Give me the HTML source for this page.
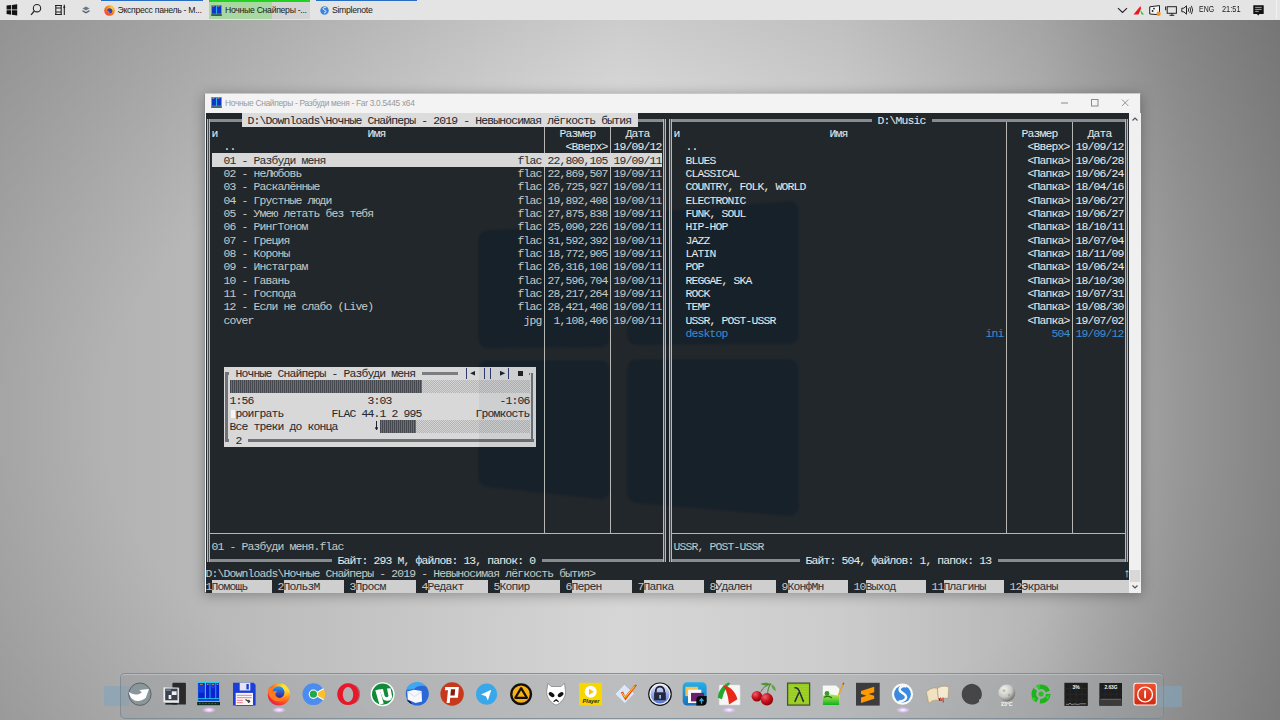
<!DOCTYPE html>
<html><head><meta charset="utf-8"><style>
*{margin:0;padding:0;box-sizing:border-box}
html,body{width:1280px;height:720px;overflow:hidden}
body{position:relative;font-family:"Liberation Sans",sans-serif;
 background:radial-gradient(farthest-corner at 620px 420px,rgba(0,0,0,0) 55%,rgba(0,0,0,.17) 100%),linear-gradient(90deg,#acacac 0,#b8b8b8 200px,#c6c6c6 400px,#d6d6d6 620px,#cccccc 840px,#b6b6b6 1040px,#9a9a9a 1180px,#8c8c8c 1280px)}
#tb{position:absolute;left:0;top:0;width:1280px;height:19.5px;background:#e4e4e4}
.tbt{position:absolute;top:4.6px;font-size:8.7px;color:#1a1a1a;white-space:pre;letter-spacing:-0.3px}
#shadow{position:absolute;left:204px;top:93px;width:937px;height:500px;box-shadow:0 2px 12px rgba(0,0,0,.3)}
#win{position:absolute;left:204.3px;top:92.8px;width:937.2px;height:500.4px;background:#f3f3f3;border:1px solid #8e8e8e;border-top-color:#c8c8c8}
#con{position:absolute;left:205.5px;top:113.333px;width:923.5px;height:479.6px;background:#22272b;overflow:hidden}
.r,.t,.sq{position:absolute}
.t{white-space:pre;font-family:"Liberation Mono",monospace;font-size:11.4px;letter-spacing:-0.841px;line-height:11px;height:11px;-webkit-text-stroke:0.05px currentColor}
.sq{background:#1a2730;filter:blur(1.2px)}
#ttl{position:absolute;left:225px;top:98.3px;font-size:8.4px;color:#999;white-space:pre;letter-spacing:-0.3px}
#sb{position:absolute;left:1129px;top:113.3px;width:11.6px;height:479.5px;background:#f0f0f0}
#dock{position:absolute;left:120px;top:673.3px;width:1044px;height:45.5px;border-radius:5px;background:rgba(150,155,160,.42);border:1px solid rgba(120,135,148,.8);box-shadow:inset 0 1px 0 rgba(230,235,240,.35)}
</style></head><body>
<div id="tb">
<svg style="position:absolute;left:6px;top:4px" width="12" height="12" viewBox="0 0 12 12"><path d="M0.6 1.6L5.2 1v4.4H0.6zM6 0.9L11.2 0.2v5.2H6zM0.6 6.2h4.6v4.5L0.6 10zM6 6.2h5.2v5.3L6 10.8z" fill="#111"/></svg>
<svg style="position:absolute;left:30px;top:3px" width="12" height="13" viewBox="0 0 12 13"><circle cx="7" cy="5.2" r="3.7" fill="none" stroke="#222" stroke-width="1.1"/><path d="M4.3 8L1 11.8" stroke="#222" stroke-width="1.2"/></svg>
<svg style="position:absolute;left:54px;top:4px" width="12" height="12" viewBox="0 0 12 12"><path d="M1 1.5h7M1 10.5h7M1.8 1.5v9M7.2 1.5v9M1.8 4h5.4M1.8 8h5.4" stroke="#222" stroke-width="1.1" fill="none"/><path d="M10.3 0.8v10.2" stroke="#222" stroke-width="1.1"/><circle cx="10.3" cy="3.3" r="1" fill="#222"/></svg>
<svg style="position:absolute;left:82px;top:6px" width="8" height="8" viewBox="0 0 8 8"><path d="M4 0.5L7.5 2.5 4 4.5 0.5 2.5z" fill="#6b7a88"/><path d="M0.5 4L4 6 7.5 4V5.5L4 7.5 0.5 5.5z" fill="#4e5d6b"/></svg>
<div style="position:absolute;left:101px;top:0;width:102px;height:1.4px;background:#2a6ec4"></div>
<div style="position:absolute;left:209px;top:0;width:101px;height:19.4px;background:#d4d4d4"></div>
<div style="position:absolute;left:209px;top:0;width:63px;height:19.4px;background:#a9d8a2"></div>
<div style="position:absolute;left:209px;top:0;width:101px;height:1.6px;background:#23d11f"></div>
<div style="position:absolute;left:316px;top:0;width:101px;height:1.4px;background:#2a6ec4"></div>
<svg style="position:absolute;left:104px;top:5px" width="11" height="11" viewBox="0 0 22 22"><defs><radialGradient id="ffs" cx="0.7" cy="0.3" r="0.9"><stop offset="0" stop-color="#ffde3b"/><stop offset="0.45" stop-color="#ff8a18"/><stop offset="1" stop-color="#e8283c"/></radialGradient></defs><circle cx="11" cy="11" r="10.5" fill="url(#ffs)"/><circle cx="11.5" cy="11.5" r="5.2" fill="#3b3fb0"/><path d="M6 12c1 3 4 4.5 6.5 3.5-2-0.2-3.5-1.5-3.8-3.4z" fill="#ff9a1e"/></svg>
<div class="tbt" style="left:117.5px">Экспресс панель - М...</div>
<svg style="position:absolute;left:211px;top:5px" width="11" height="11" viewBox="0 0 11 11"><rect x="0.5" y="0.3" width="4.8" height="8.7" fill="#1232c8" stroke="#18c0ea" stroke-width="0.7"/><rect x="5.7" y="0.3" width="4.8" height="8.7" fill="#1232c8" stroke="#18c0ea" stroke-width="0.7"/><rect x="1.3" y="0.8" width="2" height="0.8" fill="#e9a640"/><rect x="6.5" y="0.8" width="2" height="0.8" fill="#e9a640"/><rect x="0.2" y="9.4" width="10.6" height="1.3" fill="#0a2a2a"/></svg>
<div class="tbt" style="left:225px">Ночные Снайперы -...</div>
<svg style="position:absolute;left:319.5px;top:6px" width="9" height="9" viewBox="0 0 18 18"><circle cx="9" cy="9" r="8.5" fill="#3b86d8"/><path d="M11.5 3.2c-3-1.2-6 0.5-5.2 3 0.6 1.8 4.5 2 5.2 4 0.7 2-1.2 3.6-3.5 3.8" stroke="#fff" stroke-width="2" fill="none"/></svg>
<div class="tbt" style="left:332px">Simplenote</div>
<svg style="position:absolute;left:1117px;top:7px" width="11" height="7" viewBox="0 0 11 7"><path d="M1 1.2L5.5 5.5 10 1.2" stroke="#222" stroke-width="1.1" fill="none"/></svg>
<svg style="position:absolute;left:1133px;top:5px" width="12" height="10" viewBox="0 0 12 10"><path d="M0.5 9.5L7.5 1 8 3.5 5.5 9.5z" fill="#f0141e"/><path d="M7 4.5L11 9.5H8.5z" fill="#19d13a"/></svg>
<svg style="position:absolute;left:1148.5px;top:4.5px" width="13" height="11" viewBox="0 0 13 11"><path d="M0.7 1.8L10.5 0.6V9.8L0.7 9z" fill="#f4f4f4" stroke="#222" stroke-width="1"/><circle cx="5" cy="3.6" r="0.9" fill="#222"/><circle cx="3.6" cy="6" r="0.9" fill="#222"/><circle cx="9.6" cy="8.7" r="2.1" fill="#f7931a"/></svg>
<svg style="position:absolute;left:1164.5px;top:5.5px" width="12" height="10" viewBox="0 0 12 10"><rect x="2.2" y="0.7" width="9.2" height="6.6" fill="none" stroke="#222" stroke-width="1"/><path d="M4.5 9.3h4.8M6.9 7.3v2" stroke="#222" stroke-width="1"/><path d="M0.6 0.5v3.8" stroke="#333" stroke-width="1.2"/></svg>
<svg style="position:absolute;left:1180.5px;top:5px" width="12" height="10" viewBox="0 0 12 10"><path d="M0.8 3.2h2L5.5 0.8v8.4L2.8 6.8h-2z" fill="none" stroke="#222" stroke-width="1"/><path d="M7.2 3.2q1 1.8 0 3.6M8.8 2q1.8 3 0 6M10.4 0.8q2.5 4.2 0 8.4" stroke="#222" stroke-width="0.9" fill="none"/></svg>
<div class="tbt" style="left:1198.8px;font-size:8.8px;top:4.3px;letter-spacing:0;transform:scaleX(0.79);transform-origin:0 0">ENG</div>
<div class="tbt" style="left:1222.3px;font-size:8.8px;top:4.3px;letter-spacing:0;transform:scaleX(0.84);transform-origin:0 0">21:51</div>
<svg style="position:absolute;left:1252.5px;top:5px" width="11" height="11" viewBox="0 0 11 11"><path d="M0.3 0.3h10.4v8.6H6.5L5.2 10.5 3.9 8.9H0.3z" fill="#111"/><path d="M2.2 2.4h6.5M2.2 4.4h6.5M2.2 6.4h3.5" stroke="#c8c8c8" stroke-width="0.8"/></svg>
<div style="position:absolute;left:1276px;top:0;width:1px;height:19.4px;background:#f2f2f2"></div>
</div>
<div id="shadow"></div>
<div id="win"></div>
<svg style="position:absolute;left:211px;top:97px" width="11" height="11" viewBox="0 0 11 11"><rect x="0.5" y="0.3" width="4.8" height="8.7" fill="#1232c8" stroke="#18c0ea" stroke-width="0.7"/><rect x="5.7" y="0.3" width="4.8" height="8.7" fill="#1232c8" stroke="#18c0ea" stroke-width="0.7"/><rect x="1.3" y="0.8" width="2" height="0.8" fill="#e9a640"/><rect x="6.5" y="0.8" width="2" height="0.8" fill="#e9a640"/><rect x="0.2" y="9.4" width="10.6" height="1.3" fill="#0a2a2a"/></svg>
<div id="ttl">Ночные Снайперы - Разбуди меня - Far 3.0.5445 x64</div>
<svg style="position:absolute;left:1060px;top:98px" width="70" height="10" viewBox="0 0 70 10"><path d="M1 5h7" stroke="#8a8a8a" stroke-width="1"/><rect x="31.5" y="1.5" width="6.5" height="6.5" fill="none" stroke="#8a8a8a" stroke-width="1"/><path d="M62 1.5l6.3 6.5M68.3 1.5L62 8" stroke="#8a8a8a" stroke-width="0.9"/></svg>
<div id="con">
<svg style="position:absolute;left:0;top:0;filter:blur(1.2px)" width="924" height="480"><path d="M281.5 126.7 L394.5 121.7 L394.5 224.7 L281.5 225.7Z" fill="#17212a" stroke="#17212a" stroke-width="18" stroke-linejoin="round"/><path d="M430.5 109.7 L583.5 97.7 L583.5 221.7 L430.5 222.7Z" fill="#17212a" stroke="#17212a" stroke-width="18" stroke-linejoin="round"/><path d="M281.5 256.7 L394.5 256.7 L394.5 376.7 L281.5 364.7Z" fill="#17212a" stroke="#17212a" stroke-width="18" stroke-linejoin="round"/><path d="M430.5 255.7 L583.5 255.7 L583.5 393.7 L430.5 380.7Z" fill="#17212a" stroke="#17212a" stroke-width="18" stroke-linejoin="round"/></svg>
<div class="r" style="left:1.50px;top:5.70px;width:459.00px;height:3.00px;background-color:#888b8f;"></div>
<div class="r" style="left:1.50px;top:445.60px;width:459.00px;height:3.00px;background-color:#888b8f;"></div>
<div class="r" style="left:1.30px;top:5.70px;width:1.20px;height:442.90px;background-color:#b8b9b5;"></div>
<div class="r" style="left:3.50px;top:5.70px;width:1.20px;height:442.90px;background-color:#b8b9b5;"></div>
<div class="r" style="left:2.50px;top:5.70px;width:1.00px;height:442.90px;background-color:#4a4e52;"></div>
<div class="r" style="left:457.30px;top:5.70px;width:1.20px;height:442.90px;background-color:#b8b9b5;"></div>
<div class="r" style="left:459.50px;top:5.70px;width:1.20px;height:442.90px;background-color:#b8b9b5;"></div>
<div class="r" style="left:458.50px;top:5.70px;width:1.00px;height:442.90px;background-color:#4a4e52;"></div>
<div class="r" style="left:338.60px;top:8.70px;width:1.10px;height:411.23px;background-color:#b6b7b3;"></div>
<div class="r" style="left:404.60px;top:8.70px;width:1.10px;height:411.23px;background-color:#b6b7b3;"></div>
<div class="r" style="left:4.50px;top:419.43px;width:453.00px;height:1.10px;background-color:#b6b7b3;"></div>
<div class="r" style="left:463.50px;top:5.70px;width:459.00px;height:3.00px;background-color:#888b8f;"></div>
<div class="r" style="left:463.50px;top:445.60px;width:459.00px;height:3.00px;background-color:#888b8f;"></div>
<div class="r" style="left:463.30px;top:5.70px;width:1.20px;height:442.90px;background-color:#b8b9b5;"></div>
<div class="r" style="left:465.50px;top:5.70px;width:1.20px;height:442.90px;background-color:#b8b9b5;"></div>
<div class="r" style="left:464.50px;top:5.70px;width:1.00px;height:442.90px;background-color:#4a4e52;"></div>
<div class="r" style="left:919.30px;top:5.70px;width:1.20px;height:442.90px;background-color:#b8b9b5;"></div>
<div class="r" style="left:921.50px;top:5.70px;width:1.20px;height:442.90px;background-color:#b8b9b5;"></div>
<div class="r" style="left:920.50px;top:5.70px;width:1.00px;height:442.90px;background-color:#4a4e52;"></div>
<div class="r" style="left:800.60px;top:8.70px;width:1.10px;height:411.23px;background-color:#b6b7b3;"></div>
<div class="r" style="left:866.60px;top:8.70px;width:1.10px;height:411.23px;background-color:#b6b7b3;"></div>
<div class="r" style="left:466.50px;top:419.43px;width:453.00px;height:1.10px;background-color:#b6b7b3;"></div>
<div class="r" style="left:6.00px;top:40.00px;width:450.00px;height:13.33px;background-color:#d8d8d8;"></div>
<div class="r" style="left:6.00px;top:466.67px;width:60.00px;height:13.33px;background-color:#cfcfcf;"></div>
<div class="r" style="left:78.00px;top:466.67px;width:60.00px;height:13.33px;background-color:#cfcfcf;"></div>
<div class="r" style="left:150.00px;top:466.67px;width:60.00px;height:13.33px;background-color:#cfcfcf;"></div>
<div class="r" style="left:222.00px;top:466.67px;width:60.00px;height:13.33px;background-color:#cfcfcf;"></div>
<div class="r" style="left:294.00px;top:466.67px;width:60.00px;height:13.33px;background-color:#cfcfcf;"></div>
<div class="r" style="left:366.00px;top:466.67px;width:60.00px;height:13.33px;background-color:#cfcfcf;"></div>
<div class="r" style="left:438.00px;top:466.67px;width:60.00px;height:13.33px;background-color:#cfcfcf;"></div>
<div class="r" style="left:510.00px;top:466.67px;width:60.00px;height:13.33px;background-color:#cfcfcf;"></div>
<div class="r" style="left:582.00px;top:466.67px;width:60.00px;height:13.33px;background-color:#cfcfcf;"></div>
<div class="r" style="left:660.00px;top:466.67px;width:60.00px;height:13.33px;background-color:#cfcfcf;"></div>
<div class="r" style="left:738.00px;top:466.67px;width:60.00px;height:13.33px;background-color:#cfcfcf;"></div>
<div class="r" style="left:816.00px;top:466.67px;width:108.00px;height:13.33px;background-color:#cfcfcf;"></div>
<div class="r" style="left:18.00px;top:253.33px;width:312.00px;height:80.00px;background-color:#d8d8d8;"></div>
<div class="r" style="left:19.60px;top:259.03px;width:2.90px;height:68.17px;background-color:#6f7276;"></div>
<div class="r" style="left:19.60px;top:259.03px;width:4.40px;height:2.60px;background-color:#6f7276;"></div>
<div class="r" style="left:325.40px;top:259.23px;width:2.60px;height:67.97px;background-color:#6f7276;"></div>
<div class="r" style="left:323.00px;top:259.23px;width:1.60px;height:2.40px;background-color:#6f7276;"></div>
<div class="r" style="left:19.60px;top:325.70px;width:3.50px;height:2.50px;background-color:#6f7276;"></div>
<div class="r" style="left:42.00px;top:325.70px;width:286.00px;height:2.50px;background-color:#6f7276;"></div>
<div class="r" style="left:216.00px;top:258.93px;width:36.00px;height:2.50px;background-color:#7b7d80;"></div>
<div class="r" style="left:260.50px;top:254.83px;width:1.20px;height:10.50px;background-color:#2f3a6a;"></div>
<div class="r" style="left:278.50px;top:254.83px;width:1.20px;height:10.50px;background-color:#2f3a6a;"></div>
<div class="r" style="left:284.50px;top:254.83px;width:1.20px;height:10.50px;background-color:#2f3a6a;"></div>
<div class="r" style="left:302.50px;top:254.83px;width:1.20px;height:10.50px;background-color:#2f3a6a;"></div>
<div class="r" style="left:264.60px;top:257.53px;width:5.40px;height:5.00px;background-color:transparent;clip-path:polygon(0 50%,100% 0,100% 100%);background:#1c2430"></div>
<div class="r" style="left:294.40px;top:257.53px;width:5.40px;height:5.00px;background-color:transparent;clip-path:polygon(0 0,100% 50%,0 100%);background:#1c2430"></div>
<div class="r" style="left:312.40px;top:257.63px;width:5.20px;height:5.20px;background-color:#1e2226;"></div>
<div class="r" style="left:24.00px;top:266.67px;width:192.00px;height:12.53px;background-color:#55585c;background-image:repeating-linear-gradient(90deg,#45484e 0 1px,#6c6e70 1px 2px)"></div>
<div class="r" style="left:216.00px;top:266.67px;width:108.00px;height:12.53px;background-color:#c4c4c4;background:repeating-conic-gradient(#b4b5b7 0 25%,#d3d3d3 0 50%) 0 0/2px 2px"></div>
<div class="r" style="left:25.00px;top:296.33px;width:4.50px;height:8.00px;background-color:#f6f6f6;"></div>
<div class="r" style="left:170.50px;top:307.87px;width:1.10px;height:8.60px;background-color:#1c2430;"></div>
<div class="r" style="left:169.10px;top:313.87px;width:3.90px;height:3.20px;background-color:transparent;clip-path:polygon(0 0,100% 0,50% 100%);background:#1c2430"></div>
<div class="r" style="left:174.00px;top:306.67px;width:36.00px;height:12.53px;background-color:#55585c;background-image:repeating-linear-gradient(90deg,#45484e 0 1px,#6c6e70 1px 2px)"></div>
<div class="r" style="left:210.00px;top:306.67px;width:114.00px;height:12.53px;background-color:#c4c4c4;background:repeating-conic-gradient(#b4b5b7 0 25%,#d3d3d3 0 50%) 0 0/2px 2px"></div>
<div class="r" style="left:36.00px;top:0.000px;width:396.00px;height:13.333px;background:#dcdcdc"></div>
<div class="t" style="left:36.00px;top:2.200px;color:#232a30"> D:\Downloads\Ночные Снайперы - 2019 - Невыносимая лёгкость бытия </div>
<div class="r" style="left:666.00px;top:0.000px;width:60.00px;height:13.333px;background:#22272b"></div>
<div class="t" style="left:666.00px;top:2.200px;color:#e8e8e6"> D:\Music </div>
<div class="t" style="left:6.00px;top:15.533px;color:#e8e8e6">и</div>
<div class="t" style="left:162.00px;top:15.533px;color:#e8e8e6">Имя</div>
<div class="t" style="left:354.00px;top:15.533px;color:#e8e8e6">Размер</div>
<div class="t" style="left:420.00px;top:15.533px;color:#e8e8e6">Дата</div>
<div class="t" style="left:18.00px;top:28.867px;color:#e8e8e6">..</div>
<div class="t" style="left:360.00px;top:28.867px;color:#e8e8e6">&lt;Вверх&gt;</div>
<div class="t" style="left:408.00px;top:28.867px;color:#e8e8e6">19/09/12</div>
<div class="t" style="left:468.00px;top:15.533px;color:#e8e8e6">и</div>
<div class="t" style="left:624.00px;top:15.533px;color:#e8e8e6">Имя</div>
<div class="t" style="left:816.00px;top:15.533px;color:#e8e8e6">Размер</div>
<div class="t" style="left:882.00px;top:15.533px;color:#e8e8e6">Дата</div>
<div class="t" style="left:480.00px;top:28.867px;color:#e8e8e6">..</div>
<div class="t" style="left:822.00px;top:28.867px;color:#e8e8e6">&lt;Вверх&gt;</div>
<div class="t" style="left:870.00px;top:28.867px;color:#e8e8e6">19/09/12</div>
<div class="t" style="left:18.00px;top:42.200px;color:#2a3036">01 - Разбуди меня</div>
<div class="t" style="left:312.00px;top:42.200px;color:#2a3036">flac</div>
<div class="t" style="left:342.00px;top:42.200px;color:#2a3036">22,800,105</div>
<div class="t" style="left:408.00px;top:42.200px;color:#2a3036">19/09/11</div>
<div class="t" style="left:18.00px;top:55.533px;color:#c6c7c3">02 - неЛюбовь</div>
<div class="t" style="left:312.00px;top:55.533px;color:#c6c7c3">flac</div>
<div class="t" style="left:342.00px;top:55.533px;color:#c6c7c3">22,869,507</div>
<div class="t" style="left:408.00px;top:55.533px;color:#c6c7c3">19/09/11</div>
<div class="t" style="left:18.00px;top:68.867px;color:#c6c7c3">03 - Раскалённые</div>
<div class="t" style="left:312.00px;top:68.867px;color:#c6c7c3">flac</div>
<div class="t" style="left:342.00px;top:68.867px;color:#c6c7c3">26,725,927</div>
<div class="t" style="left:408.00px;top:68.867px;color:#c6c7c3">19/09/11</div>
<div class="t" style="left:18.00px;top:82.200px;color:#c6c7c3">04 - Грустные люди</div>
<div class="t" style="left:312.00px;top:82.200px;color:#c6c7c3">flac</div>
<div class="t" style="left:342.00px;top:82.200px;color:#c6c7c3">19,892,408</div>
<div class="t" style="left:408.00px;top:82.200px;color:#c6c7c3">19/09/11</div>
<div class="t" style="left:18.00px;top:95.533px;color:#c6c7c3">05 - Умею летать без тебя</div>
<div class="t" style="left:312.00px;top:95.533px;color:#c6c7c3">flac</div>
<div class="t" style="left:342.00px;top:95.533px;color:#c6c7c3">27,875,838</div>
<div class="t" style="left:408.00px;top:95.533px;color:#c6c7c3">19/09/11</div>
<div class="t" style="left:18.00px;top:108.867px;color:#c6c7c3">06 - РингТоном</div>
<div class="t" style="left:312.00px;top:108.867px;color:#c6c7c3">flac</div>
<div class="t" style="left:342.00px;top:108.867px;color:#c6c7c3">25,090,226</div>
<div class="t" style="left:408.00px;top:108.867px;color:#c6c7c3">19/09/11</div>
<div class="t" style="left:18.00px;top:122.200px;color:#c6c7c3">07 - Греция</div>
<div class="t" style="left:312.00px;top:122.200px;color:#c6c7c3">flac</div>
<div class="t" style="left:342.00px;top:122.200px;color:#c6c7c3">31,592,392</div>
<div class="t" style="left:408.00px;top:122.200px;color:#c6c7c3">19/09/11</div>
<div class="t" style="left:18.00px;top:135.533px;color:#c6c7c3">08 - Короны</div>
<div class="t" style="left:312.00px;top:135.533px;color:#c6c7c3">flac</div>
<div class="t" style="left:342.00px;top:135.533px;color:#c6c7c3">18,772,905</div>
<div class="t" style="left:408.00px;top:135.533px;color:#c6c7c3">19/09/11</div>
<div class="t" style="left:18.00px;top:148.867px;color:#c6c7c3">09 - Инстаграм</div>
<div class="t" style="left:312.00px;top:148.867px;color:#c6c7c3">flac</div>
<div class="t" style="left:342.00px;top:148.867px;color:#c6c7c3">26,316,108</div>
<div class="t" style="left:408.00px;top:148.867px;color:#c6c7c3">19/09/11</div>
<div class="t" style="left:18.00px;top:162.200px;color:#c6c7c3">10 - Гавань</div>
<div class="t" style="left:312.00px;top:162.200px;color:#c6c7c3">flac</div>
<div class="t" style="left:342.00px;top:162.200px;color:#c6c7c3">27,596,704</div>
<div class="t" style="left:408.00px;top:162.200px;color:#c6c7c3">19/09/11</div>
<div class="t" style="left:18.00px;top:175.533px;color:#c6c7c3">11 - Господа</div>
<div class="t" style="left:312.00px;top:175.533px;color:#c6c7c3">flac</div>
<div class="t" style="left:342.00px;top:175.533px;color:#c6c7c3">28,217,264</div>
<div class="t" style="left:408.00px;top:175.533px;color:#c6c7c3">19/09/11</div>
<div class="t" style="left:18.00px;top:188.867px;color:#c6c7c3">12 - Если не слабо (Live)</div>
<div class="t" style="left:312.00px;top:188.867px;color:#c6c7c3">flac</div>
<div class="t" style="left:342.00px;top:188.867px;color:#c6c7c3">28,421,408</div>
<div class="t" style="left:408.00px;top:188.867px;color:#c6c7c3">19/09/11</div>
<div class="t" style="left:18.00px;top:202.200px;color:#c6c7c3">cover</div>
<div class="t" style="left:318.00px;top:202.200px;color:#c6c7c3">jpg</div>
<div class="t" style="left:348.00px;top:202.200px;color:#c6c7c3">1,108,406</div>
<div class="t" style="left:408.00px;top:202.200px;color:#c6c7c3">19/09/11</div>
<div class="t" style="left:480.00px;top:42.200px;color:#e8e8e6">BLUES</div>
<div class="t" style="left:822.00px;top:42.200px;color:#e8e8e6">&lt;Папка&gt;</div>
<div class="t" style="left:870.00px;top:42.200px;color:#e8e8e6">19/06/28</div>
<div class="t" style="left:480.00px;top:55.533px;color:#e8e8e6">CLASSICAL</div>
<div class="t" style="left:822.00px;top:55.533px;color:#e8e8e6">&lt;Папка&gt;</div>
<div class="t" style="left:870.00px;top:55.533px;color:#e8e8e6">19/06/24</div>
<div class="t" style="left:480.00px;top:68.867px;color:#e8e8e6">COUNTRY, FOLK, WORLD</div>
<div class="t" style="left:822.00px;top:68.867px;color:#e8e8e6">&lt;Папка&gt;</div>
<div class="t" style="left:870.00px;top:68.867px;color:#e8e8e6">18/04/16</div>
<div class="t" style="left:480.00px;top:82.200px;color:#e8e8e6">ELECTRONIC</div>
<div class="t" style="left:822.00px;top:82.200px;color:#e8e8e6">&lt;Папка&gt;</div>
<div class="t" style="left:870.00px;top:82.200px;color:#e8e8e6">19/06/27</div>
<div class="t" style="left:480.00px;top:95.533px;color:#e8e8e6">FUNK, SOUL</div>
<div class="t" style="left:822.00px;top:95.533px;color:#e8e8e6">&lt;Папка&gt;</div>
<div class="t" style="left:870.00px;top:95.533px;color:#e8e8e6">19/06/27</div>
<div class="t" style="left:480.00px;top:108.867px;color:#e8e8e6">HIP-HOP</div>
<div class="t" style="left:822.00px;top:108.867px;color:#e8e8e6">&lt;Папка&gt;</div>
<div class="t" style="left:870.00px;top:108.867px;color:#e8e8e6">18/10/11</div>
<div class="t" style="left:480.00px;top:122.200px;color:#e8e8e6">JAZZ</div>
<div class="t" style="left:822.00px;top:122.200px;color:#e8e8e6">&lt;Папка&gt;</div>
<div class="t" style="left:870.00px;top:122.200px;color:#e8e8e6">18/07/04</div>
<div class="t" style="left:480.00px;top:135.533px;color:#e8e8e6">LATIN</div>
<div class="t" style="left:822.00px;top:135.533px;color:#e8e8e6">&lt;Папка&gt;</div>
<div class="t" style="left:870.00px;top:135.533px;color:#e8e8e6">18/11/09</div>
<div class="t" style="left:480.00px;top:148.867px;color:#e8e8e6">POP</div>
<div class="t" style="left:822.00px;top:148.867px;color:#e8e8e6">&lt;Папка&gt;</div>
<div class="t" style="left:870.00px;top:148.867px;color:#e8e8e6">19/06/24</div>
<div class="t" style="left:480.00px;top:162.200px;color:#e8e8e6">REGGAE, SKA</div>
<div class="t" style="left:822.00px;top:162.200px;color:#e8e8e6">&lt;Папка&gt;</div>
<div class="t" style="left:870.00px;top:162.200px;color:#e8e8e6">18/10/30</div>
<div class="t" style="left:480.00px;top:175.533px;color:#e8e8e6">ROCK</div>
<div class="t" style="left:822.00px;top:175.533px;color:#e8e8e6">&lt;Папка&gt;</div>
<div class="t" style="left:870.00px;top:175.533px;color:#e8e8e6">19/07/31</div>
<div class="t" style="left:480.00px;top:188.867px;color:#e8e8e6">TEMP</div>
<div class="t" style="left:822.00px;top:188.867px;color:#e8e8e6">&lt;Папка&gt;</div>
<div class="t" style="left:870.00px;top:188.867px;color:#e8e8e6">19/08/30</div>
<div class="t" style="left:480.00px;top:202.200px;color:#e8e8e6">USSR, POST-USSR</div>
<div class="t" style="left:822.00px;top:202.200px;color:#e8e8e6">&lt;Папка&gt;</div>
<div class="t" style="left:870.00px;top:202.200px;color:#e8e8e6">19/07/02</div>
<div class="t" style="left:480.00px;top:215.533px;color:#3d8ccc">desktop</div>
<div class="t" style="left:780.00px;top:215.533px;color:#3d8ccc">ini</div>
<div class="t" style="left:846.00px;top:215.533px;color:#3d8ccc">504</div>
<div class="t" style="left:870.00px;top:215.533px;color:#3d8ccc">19/09/12</div>
<div class="t" style="left:6.00px;top:428.867px;color:#c6c7c3">01 - Разбуди меня.flac</div>
<div class="t" style="left:468.00px;top:428.867px;color:#c6c7c3">USSR, POST-USSR</div>
<div class="r" style="left:126.00px;top:440.000px;width:210.00px;height:13.333px;background:#22272b"></div>
<div class="t" style="left:126.00px;top:442.200px;color:#e8e8e6"> Байт: 293 M, файлов: 13, папок: 0 </div>
<div class="r" style="left:594.00px;top:440.000px;width:198.00px;height:13.333px;background:#22272b"></div>
<div class="t" style="left:594.00px;top:442.200px;color:#e8e8e6"> Байт: 504, файлов: 1, папок: 13 </div>
<div class="t" style="left:0.00px;top:455.533px;color:#c6c7c3">D:\Downloads\Ночные Снайперы - 2019 - Невыносимая лёгкость бытия&gt;</div>
<div class="t" style="left:918.00px;top:455.533px;color:#e8e8e6">↑</div>
<div class="t" style="left:0.00px;top:468.867px;color:#c6c7c3">1</div>
<div class="t" style="left:6.00px;top:468.867px;color:#2c3238">Помощь</div>
<div class="t" style="left:72.00px;top:468.867px;color:#c6c7c3">2</div>
<div class="t" style="left:78.00px;top:468.867px;color:#2c3238">ПользМ</div>
<div class="t" style="left:144.00px;top:468.867px;color:#c6c7c3">3</div>
<div class="t" style="left:150.00px;top:468.867px;color:#2c3238">Просм</div>
<div class="t" style="left:216.00px;top:468.867px;color:#c6c7c3">4</div>
<div class="t" style="left:222.00px;top:468.867px;color:#2c3238">Редакт</div>
<div class="t" style="left:288.00px;top:468.867px;color:#c6c7c3">5</div>
<div class="t" style="left:294.00px;top:468.867px;color:#2c3238">Копир</div>
<div class="t" style="left:360.00px;top:468.867px;color:#c6c7c3">6</div>
<div class="t" style="left:366.00px;top:468.867px;color:#2c3238">Перен</div>
<div class="t" style="left:432.00px;top:468.867px;color:#c6c7c3">7</div>
<div class="t" style="left:438.00px;top:468.867px;color:#2c3238">Папка</div>
<div class="t" style="left:504.00px;top:468.867px;color:#c6c7c3">8</div>
<div class="t" style="left:510.00px;top:468.867px;color:#2c3238">Удален</div>
<div class="t" style="left:576.00px;top:468.867px;color:#c6c7c3">9</div>
<div class="t" style="left:582.00px;top:468.867px;color:#2c3238">КонфМн</div>
<div class="t" style="left:648.00px;top:468.867px;color:#c6c7c3">10</div>
<div class="t" style="left:660.00px;top:468.867px;color:#2c3238">Выход</div>
<div class="t" style="left:726.00px;top:468.867px;color:#c6c7c3">11</div>
<div class="t" style="left:738.00px;top:468.867px;color:#2c3238">Плагины</div>
<div class="t" style="left:804.00px;top:468.867px;color:#c6c7c3">12</div>
<div class="t" style="left:816.00px;top:468.867px;color:#2c3238">Экраны</div>
<div class="t" style="left:30.00px;top:322.200px;color:#242a30">2</div>
<div class="t" style="left:30.00px;top:255.533px;color:#242a30">Ночные Снайперы - Разбуди меня</div>
<div class="t" style="left:24.00px;top:282.200px;color:#242a30">1:56</div>
<div class="t" style="left:162.00px;top:282.200px;color:#242a30">3:03</div>
<div class="t" style="left:294.00px;top:282.200px;color:#242a30">-1:06</div>
<div class="t" style="left:30.00px;top:295.533px;color:#242a30">роиграть</div>
<div class="t" style="left:126.00px;top:295.533px;color:#242a30">FLAC 44.1 2 995</div>
<div class="t" style="left:270.00px;top:295.533px;color:#242a30">Громкость</div>
<div class="t" style="left:24.00px;top:308.867px;color:#242a30">Все треки до конца</div>
<div class="r" style="left:273.00px;top:253.33px;width:57.00px;height:80.00px;background:rgba(20,60,100,.055)"></div>
</div>
<div id="sb"></div>
<svg style="position:absolute;left:1130px;top:116px" width="10" height="476" viewBox="0 0 10 476"><path d="M2.5 4.5L5 2 7.5 4.5" stroke="#555" stroke-width="1.2" fill="none"/><rect x="0" y="454" width="10" height="12" fill="#d8d8d8"/><path d="M2.5 469.5L5 472 7.5 469.5" stroke="#555" stroke-width="1.2" fill="none"/></svg>
<div style="position:absolute;left:103.7px;top:686.2px;width:25px;height:20px;background:rgba(130,165,190,.6)"></div>
<div style="position:absolute;left:1157px;top:686.2px;width:24.7px;height:20.4px;background:rgba(130,165,190,.6)"></div>
<div id="dock"></div>
<svg style="position:absolute;left:0;top:0;pointer-events:none" width="1280" height="720" viewBox="0 0 1280 720">
<defs>
<radialGradient id="gff" cx="0.75" cy="0.2" r="0.95"><stop offset="0" stop-color="#fff44a"/><stop offset="0.35" stop-color="#ffb020"/><stop offset="0.7" stop-color="#ff4a22"/><stop offset="1" stop-color="#e0105a"/></radialGradient>
<linearGradient id="gglobe" x1="0" y1="0" x2="0" y2="1"><stop offset="0" stop-color="#20a0f8"/><stop offset="1" stop-color="#3a1a90"/></linearGradient>
<linearGradient id="glock" x1="0" y1="0" x2="0" y2="1"><stop offset="0" stop-color="#dfe6fb"/><stop offset="1" stop-color="#5474dc"/></linearGradient>
<linearGradient id="gfiles" x1="0" y1="0" x2="0" y2="1"><stop offset="0" stop-color="#22b0e8"/><stop offset="1" stop-color="#1a70c0"/></linearGradient>
<radialGradient id="gmoon" cx="0.35" cy="0.3" r="0.75"><stop offset="0" stop-color="#f6f6f0"/><stop offset="0.6" stop-color="#c4c4c0"/><stop offset="1" stop-color="#6a6a6a"/></radialGradient>
<radialGradient id="gcher" cx="0.35" cy="0.3" r="0.8"><stop offset="0" stop-color="#f06070"/><stop offset="0.5" stop-color="#c8101c"/><stop offset="1" stop-color="#7a0008"/></radialGradient>
<linearGradient id="gpow" x1="0" y1="0" x2="0" y2="1"><stop offset="0" stop-color="#f05030"/><stop offset="1" stop-color="#d02a10"/></linearGradient>
<linearGradient id="ggrass" x1="0" y1="0" x2="0" y2="1"><stop offset="0" stop-color="#b8e850"/><stop offset="1" stop-color="#10b020"/></linearGradient>
</defs>
<circle cx="139.9" cy="694.2" r="11.2" fill="#8a969c" stroke="#545c62" stroke-width="0.9"/>
<path d="M128.8 691.8C129.5 697 133 701 137.5 700.9C141 700.9 143.8 699.3 145.8 697.7L149 688.9L139.4 690L141.8 692.4C139 695 133 695.5 128.8 691.8Z" fill="#fff"/>
<path d="M172.4 683.8Q172.4 682.8 173.4 682.8H184.9Q185.9 682.8 185.9 683.8V704.6H172.4Z" fill="#2a2a2c"/>
<path d="M163.1 687L179 687.8V703L163.1 702.5Z" fill="#ececec" stroke="#9a9a9a" stroke-width="0.4"/>
<rect x="165.2" y="688.6" width="12.3" height="11.7" fill="#3a4250"/>
<rect x="171.8" y="691.3" width="4.8" height="3.7" fill="#f0f0f0"/><rect x="168.6" y="695" width="2.7" height="4" fill="#f0f0f0"/><rect x="166" y="689.5" width="5" height="1.2" fill="#8a96a8"/>
<rect x="165.4" y="703" width="11.7" height="1.6" fill="#222"/>
<rect x="197.2" y="682" width="22.8" height="19.6" fill="#22d0ee"/>
<rect x="198.2" y="683" width="6.6" height="15.2" fill="#0a22d0"/>
<rect x="206" y="683" width="3.6" height="15.2" fill="#0a22d0"/>
<rect x="210.4" y="683" width="5.0" height="15.2" fill="#0a22d0"/>
<rect x="216.2" y="683" width="2.8" height="15.2" fill="#0a22d0"/>
<rect x="199.8" y="683.8" width="3.0" height="1" fill="#f0a030"/>
<rect x="206.8" y="683.8" width="1.8" height="1" fill="#f0a030"/>
<rect x="211.6" y="683.8" width="2.6" height="1" fill="#f0a030"/>
<rect x="216.9" y="683.8" width="1.4" height="1" fill="#f0a030"/>
<rect x="198.2" y="684.8" width="6.6" height="8" fill="#1a48e0" opacity="0.7"/><rect x="210.4" y="684.8" width="5" height="3.6" fill="#1a48e0" opacity="0.7"/>
<rect x="198.2" y="699" width="21" height="1.8" fill="#1030d8"/>
<rect x="197.2" y="702" width="22.8" height="3.2" fill="#0c2a20"/>
<path d="M199 703.6h19" stroke="#3a8a6a" stroke-width="0.8" stroke-dasharray="1.5 1.6"/>
<path d="M233 682.8H253.6L255.6 684.8V705.6H233Z" fill="#1b3ed8"/>
<rect x="239.7" y="682.8" width="10.6" height="7.7" fill="#e4e4ea"/><rect x="246.4" y="684" width="2.4" height="5.4" fill="#1b3ed8"/>
<rect x="235.7" y="692.9" width="17.3" height="12.2" fill="#faf6f6"/>
<path d="M236.8 695.3h15M236.8 697.7h15M236.8 700.3h6M236.8 702.7h6" stroke="#e8485a" stroke-width="0.7"/>
<path d="M245.5 699.5l2 1.2 1.6 2.2M248.5 699.8l1.5 2" stroke="#333" stroke-width="1.2" fill="none"/>
<rect x="235.7" y="705" width="17.3" height="0.8" fill="#b02030"/>
<circle cx="278.9" cy="694.5" r="11.1" fill="url(#gff)"/>
<circle cx="278.5" cy="692.2" r="6" fill="url(#gglobe)"/>
<path d="M268.2 689.5C267.5 696 272 701 278 701.2C283 701.2 286 698.5 287 696C284.5 698.3 279.5 699 276.5 696.5C274.5 694.8 275.5 692.5 277.5 691.8C276 690.5 273.5 690.8 272.5 691.5C272.5 690 272.8 688.8 274 687.8C271.8 687.8 270 688.5 269.6 686.5C268.8 687.3 268.4 688.4 268.2 689.5Z" fill="#ff7a1e"/>
<path d="M281.2 683C285.8 684.5 289.5 688.5 290 694C288.5 691 286 689.2 283.6 688.8C283.6 686.6 282.8 684.6 281.2 683Z" fill="#ffe030"/>
<circle cx="313.4" cy="694.2" r="10.9" fill="#4a8cf0"/>
<path d="M313.4 694.2L323.6 688.7A10.9 10.9 0 0 1 323.6 699.7Z" fill="#fcc12a"/>
<path d="M317.2 692.2L323.6 688.7M317.2 696.2L323.6 699.7" stroke="#fff" stroke-width="1.1"/>
<circle cx="313.4" cy="694.2" r="4.7" fill="#fff"/><circle cx="313.4" cy="694.2" r="3.6" fill="#22a84a"/>
<path d="M348.1 683.3A10.9 10.9 0 1 1 348.09 683.3ZM348 687.1A5.2 7.4 0 1 0 348.01 687.1Z" fill="#e8182a" fill-rule="evenodd"/>
<path d="M353.5 684.8A10.9 10.9 0 0 1 353.5 703.6A5.2 7.4 0 0 0 353.5 684.8Z" fill="#b00e1e" opacity="0.45"/>
<circle cx="382.6" cy="694.2" r="12" fill="#fff"/><circle cx="382.6" cy="694.2" r="10.6" fill="#118a3a"/>
<path d="M375.3 690.2L379.6 689.2L383.7 703.6L379.4 704.6Z" fill="#fff"/>
<path d="M379.4 689.4L383 689L384.5 695.5C385 697.5 387.5 697.8 388.5 696L387 688.6L390.6 688.2L392 696C392.3 699.8 389 701.2 386.6 700.8C385 700.6 383.8 700 383 699Z" fill="#fff"/>
<circle cx="417.3" cy="694" r="11.5" fill="#2a68d8"/>
<path d="M406 690A11.5 11.5 0 0 1 426 686.5C422 685 417 686 414 689Z" fill="#40a8f0"/>
<path d="M407.3 691.5L414 689.8L421.5 691L422.1 701.5L415.5 703L407.8 699.5Z" fill="#f8f8fa"/>
<path d="M407.3 691.5L414.5 696.5L421.8 691.5" stroke="#c4c8d4" stroke-width="0.6" fill="none"/>
<path d="M406.5 699.5C408 702 410 703.5 412 704L410.5 701.5Z" fill="#101a50"/>
<circle cx="452.1" cy="694" r="11.7" fill="#c9381a"/>
<path d="M445.2 687H458.9L457.9 697.8H450.2L449.7 703H446.6L448 690.2H445Z" fill="#fff"/>
<path d="M451 689.3H455.2L454.6 695.6H450.4Z" fill="#8a1a0a"/>
<circle cx="486.6" cy="694.2" r="10.6" fill="#38a8ea"/>
<path d="M481 694.4L491.3 689.8L487.9 700.6L485.9 696.3Z" fill="#fff"/>
<circle cx="521.1" cy="694.2" r="11" fill="#111"/><circle cx="521.1" cy="694.2" r="8.6" fill="#f8b012"/>
<path d="M521.1 688.1L526.9 697.8H515.3Z" fill="none" stroke="#111" stroke-width="2.2" stroke-linejoin="round"/>
<path d="M547.8 683.3L551.3 686.5H561L564.5 683.3L565.6 692C565.6 698 560.5 703.5 556.1 705.1C551.7 703.5 546.6 698 546.6 692Z" fill="#fff" stroke="#6a6a6a" stroke-width="0.6"/>
<ellipse cx="551.6" cy="694.6" rx="3.2" ry="1.9" transform="rotate(35 551.6 694.6)" fill="#111"/><ellipse cx="560.6" cy="694.6" rx="3.2" ry="1.9" transform="rotate(-35 560.6 694.6)" fill="#111"/>
<path d="M553.6 701.8L556.1 699.8L558.6 701.8" stroke="#111" stroke-width="1.1" fill="none"/>
<rect x="579" y="682.8" width="23.1" height="22.8" fill="#f8d600"/>
<circle cx="590.7" cy="691.8" r="6" fill="#fff"/><path d="M589 688.8L594 691.8L589 694.8Z" fill="#f8c400"/>
<text x="591" y="703.2" font-family="Liberation Sans" font-size="5.6" font-weight="bold" font-style="italic" text-anchor="middle" fill="#2a2a2a">Player</text>
<path d="M615 694L624.3 684.4L634.4 693.4L624.9 703.5Z" fill="#dde8f6" stroke="#a8b8d0" stroke-width="0.6"/>
<path d="M620.8 692.5L625.4 700.5L637 685.2L635.2 684.4L625 696.2L623.2 691.6Z" fill="#e85010"/>
<path d="M622.2 693L625.2 697.5L634.5 686.5" stroke="#ffd820" stroke-width="1" fill="none"/>
<circle cx="660" cy="694.2" r="11.8" fill="#111"/><circle cx="660" cy="694.2" r="10.6" fill="#f4f6fc"/><circle cx="660" cy="694.2" r="9.4" fill="url(#glock)"/>
<path d="M655.8 692.5V690.8A4.2 4.2 0 0 1 664.2 690.8V692.5" stroke="#1a1e2a" stroke-width="1.8" fill="none"/>
<rect x="654.1" y="692.3" width="11.7" height="8" fill="#23283a"/><rect x="659.2" y="695" width="1.8" height="3.6" fill="#9ab0f0"/>
<rect x="682.7" y="682.3" width="23.9" height="23.3" rx="4.5" fill="url(#gfiles)"/>
<rect x="685.4" y="686.8" width="12.7" height="9.3" fill="#f8c050"/>
<rect x="688" y="689.7" width="13.3" height="13.3" fill="#f8f8f8"/>
<rect x="691" y="692.9" width="13" height="8.5" fill="#6a2070"/>
<path d="M696.3 700Q696.3 696 700.3 696H706.6V701.6Q706.6 705.6 702.6 705.6H696.3Z" fill="#0a0a0a"/>
<path d="M701.5 703.8V699.3M699.6 701L701.5 698.8L703.4 701" stroke="#2ab0f0" stroke-width="1.3" fill="none"/>
<rect x="719.1" y="684.9" width="21" height="20.2" rx="1.2" fill="#f6f6f6" stroke="#d8d8d8" stroke-width="0.5"/>
<path d="M717.8 697.7C718.5 691 722 685.5 728.5 682.6L730.2 683.6C726 687.5 723.5 692.5 722 699.3Z" fill="#22a82a"/>
<path d="M723.1 685.4C730 686 735.5 691.5 737.4 699.3L729 704.6C728.5 697 726.5 690 723.1 685.4Z" fill="#e82818"/>
<path d="M760.8 691.8C763 687.5 766.5 685 770.8 683.8M767.7 695C767.5 690.5 768.5 686.5 770.8 683.8" stroke="#3a7a18" stroke-width="0.9" fill="none"/>
<path d="M760.5 684C763.5 682 768 682.2 771 684.6C768 685.8 763.5 686 760.5 684Z" fill="#4a9a2a"/><path d="M771.2 684.6C774 685 776 688 775.6 691.3C773.2 690 771.5 687.5 771.2 684.6Z" fill="#5aaa30"/>
<circle cx="756.9" cy="696.3" r="5.3" fill="url(#gcher)"/><circle cx="766.9" cy="699.3" r="6.2" fill="url(#gcher)"/>
<rect x="787.6" y="683.1" width="22" height="22" fill="#98cc22" stroke="#4a5438" stroke-width="1.3"/>
<path d="M789 686.5h19.5M789 689h19.5M789 691.5h19.5M789 694h19.5M789 696.5h19.5M789 699h19.5M789 701.5h19.5" stroke="#a8dc3a" stroke-width="0.5"/>
<path d="M795 687.7C797 687.5 798 688.5 799 690.5L803.4 701.4M798.7 693L795 701.4" stroke="#262c3a" stroke-width="1.5" fill="none" stroke-linecap="round"/>
<path d="M822.8 685.4H836L839.3 688.8V705.1H822.8Z" fill="#f6f8f4"/>
<path d="M822.8 695.5C828 694 834 694.5 839.3 696V705.1H822.8Z" fill="url(#ggrass)"/>
<circle cx="827" cy="693.5" r="2.4" fill="#3a9a30"/><path d="M824 697.5C826 696 830 696 832 698" stroke="#2a7020" stroke-width="1.2" fill="none"/>
<path d="M838.3 695.5L843.6 683.3" stroke="#e8a020" stroke-width="1.4"/><path d="M843 684.6L843.8 682.8" stroke="#c84040" stroke-width="1.4"/>
<rect x="856" y="682.8" width="23.7" height="22.8" fill="#3c3c3e"/>
<path d="M861 691L874.2 686.8V692.2L868.6 694L874.2 695.8V698.8L861 703V697.6L866.6 695.8L861 694Z" fill="#ff9a00"/>
<circle cx="902.5" cy="694.2" r="10.6" fill="#fafafa"/><circle cx="902.5" cy="694.2" r="8.4" fill="#3a8be0"/>
<path d="M906.5 686.5C902.5 685.2 898.8 687.5 899.8 690.5C900.6 693 905.5 693.5 906 696.5C906.6 699.8 902.8 701.8 898.5 701.5" stroke="#fafafa" stroke-width="2.4" fill="none"/>
<path d="M926.4 692C930 688.5 934 687 937.5 688.5L938.5 700.5C935.5 699.5 931.5 700.5 928.8 703.5Z" fill="#f0e2c0" stroke="#a88a5a" stroke-width="0.5"/>
<path d="M937.5 688.5C940.5 686 944.5 685.5 948.7 687L948 698.5C945 697.5 941.5 698.5 938.5 700.5Z" fill="#f4ead2" stroke="#a88a5a" stroke-width="0.5"/>
<path d="M942.9 697.5L943.3 702.5M940.5 697.5L941.5 701" stroke="#e02828" stroke-width="1.1"/><path d="M939 698L940 701" stroke="#6a1a2a" stroke-width="1"/>
<path d="M971.7 683.8A10.4 10.4 0 1 0 979.2 701.8C978.5 700.5 979.3 699 980.8 698.8A10.4 10.4 0 0 0 971.7 683.8Z" fill="#464648"/>
<circle cx="1006.8" cy="692.9" r="8.5" fill="url(#gmoon)"/><circle cx="1004" cy="690.5" r="1.6" fill="#a8a8a4" opacity="0.7"/><circle cx="1009" cy="695" r="1.3" fill="#9a9a96" opacity="0.7"/>
<text x="1006.8" y="706.2" font-family="Liberation Sans" font-size="5.2" font-weight="bold" text-anchor="middle" fill="#fafafa">23°C</text>
<circle cx="1041" cy="694" r="7.2" fill="none" stroke="#1cb41a" stroke-width="4.6" stroke-dasharray="12.2 2.9"/>
<path d="M1035.5 686.5L1040 684.8L1039.5 689.5ZM1049.5 695L1048 700L1045 696.5ZM1034 702L1031.5 697.5L1035.8 698Z" fill="#30d02a"/>
<circle cx="1041" cy="694" r="2.5" fill="#26c020"/>
<rect x="1064.4" y="682.8" width="23.4" height="23.1" fill="#1e1e1e"/>
<path d="M1064.4 688.5h23.4M1064.4 694.3h23.4M1064.4 700h23.4M1070.2 682.8v23.1M1076.1 682.8v23.1M1082 682.8v23.1" stroke="#303030" stroke-width="0.5"/>
<text x="1076" y="689" font-family="Liberation Sans" font-size="5" font-weight="bold" text-anchor="middle" fill="#f4f4f4">3%</text>
<path d="M1066 704.3h3l1-1.3 1 1.3h3l1-0.6 1 0.6h3l1-0.5h6" stroke="#c8c8c8" stroke-width="0.6" fill="none"/>
<rect x="1099.4" y="683" width="22.6" height="22.6" fill="#1e1e1e"/>
<path d="M1099.4 688.7h22.6M1099.4 694.3h22.6M1105 683v22.6M1110.7 683v22.6M1116.3 683v22.6" stroke="#2c2c2c" stroke-width="0.5"/>
<rect x="1099.4" y="699.5" width="22.6" height="6.1" fill="#3a3a3a"/>
<path d="M1100.5 699.3h20.5" stroke="#8a8a8a" stroke-width="0.7"/>
<text x="1111" y="689" font-family="Liberation Sans" font-size="4.8" font-weight="bold" text-anchor="middle" fill="#f4f4f4">2.63G</text>
<rect x="1133.4" y="682.8" width="23.4" height="22.8" rx="2.5" fill="#f4f4f4"/><rect x="1134.4" y="683.8" width="21.4" height="20.8" rx="2" fill="url(#gpow)"/>
<circle cx="1145.1" cy="694.5" r="7.4" fill="none" stroke="#fff" stroke-width="1.4"/><path d="M1145.1 690.6V698.2" stroke="#fff" stroke-width="1.8"/>
</svg>
<div style="position:absolute;left:202.30px;top:707.3px;width:14px;height:5.5px;border-radius:50%;background:radial-gradient(closest-side,#fff 0%,#e8c8ff 45%,rgba(220,180,255,0) 100%)"></div>
<div style="position:absolute;left:271.90px;top:707.3px;width:14px;height:5.5px;border-radius:50%;background:radial-gradient(closest-side,#fff 0%,#e8c8ff 45%,rgba(220,180,255,0) 100%)"></div>
<div style="position:absolute;left:722.30px;top:707.3px;width:14px;height:5.5px;border-radius:50%;background:radial-gradient(closest-side,#fff 0%,#e8c8ff 45%,rgba(220,180,255,0) 100%)"></div>
<div style="position:absolute;left:895.50px;top:707.3px;width:14px;height:5.5px;border-radius:50%;background:radial-gradient(closest-side,#fff 0%,#e8c8ff 45%,rgba(220,180,255,0) 100%)"></div>
</body></html>
